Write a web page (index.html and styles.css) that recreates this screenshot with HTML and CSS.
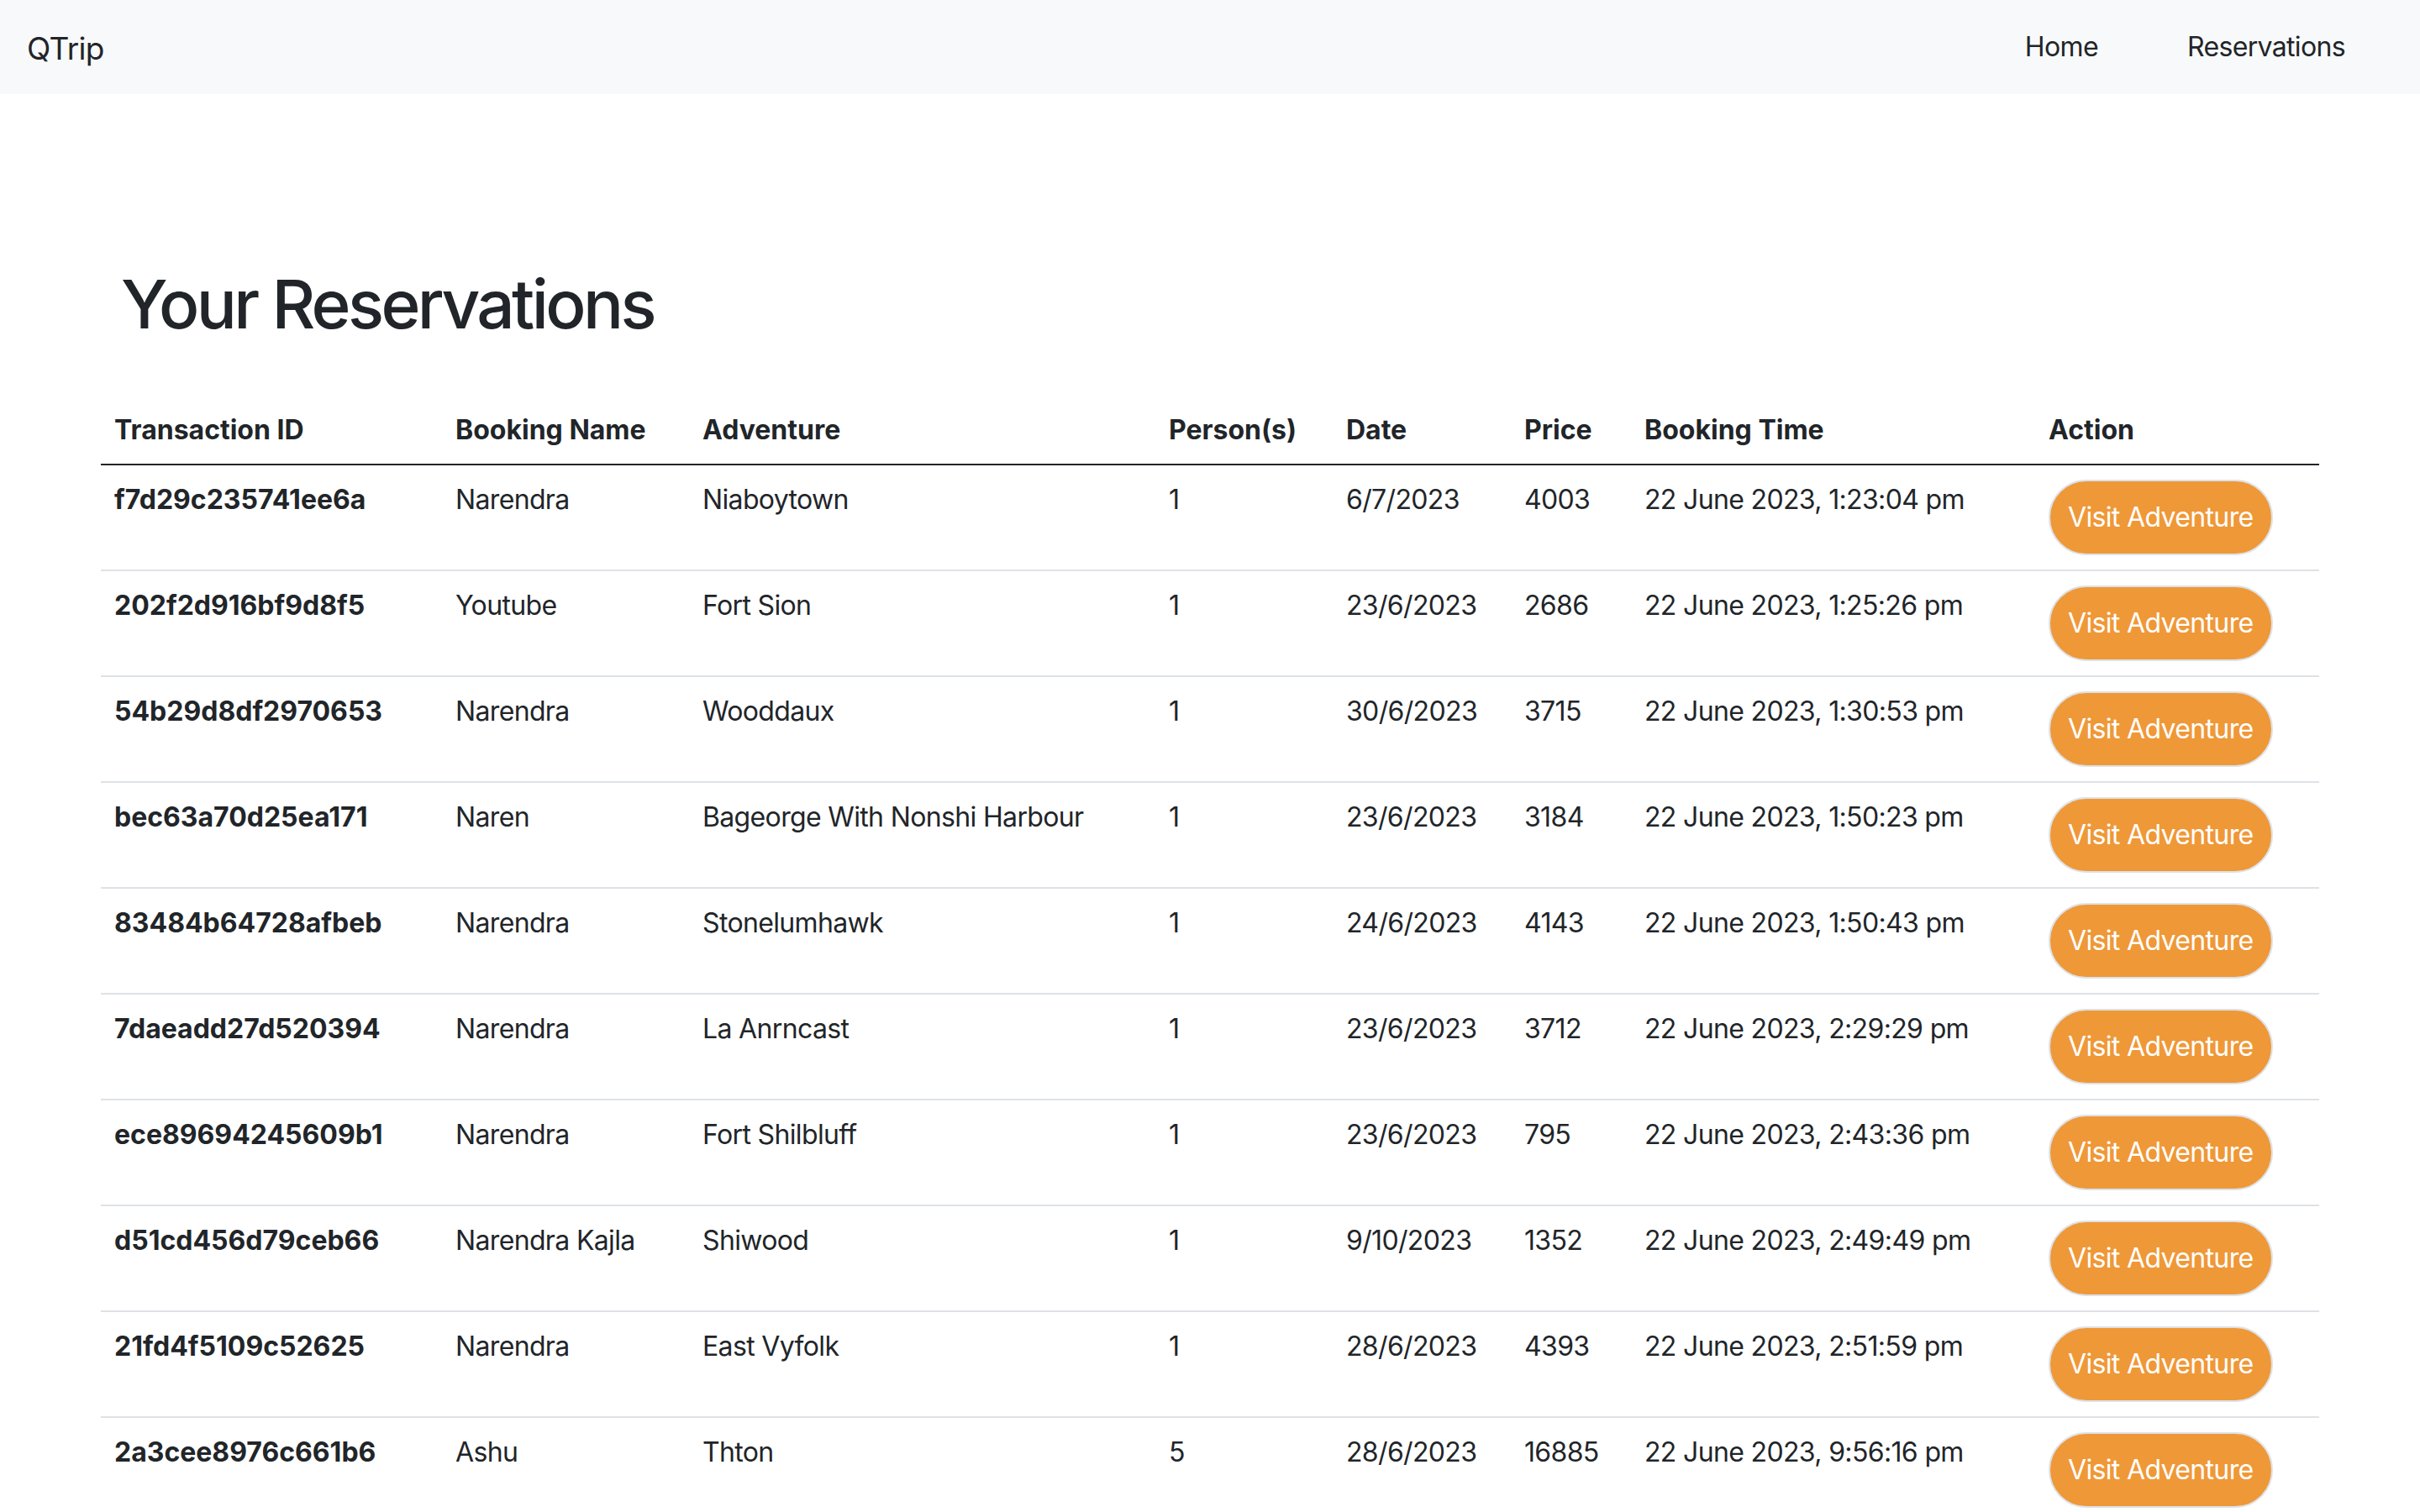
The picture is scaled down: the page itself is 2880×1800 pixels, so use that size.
FILE: index.html
```html
<!DOCTYPE html>
<html lang="en">
<head>
<meta charset="utf-8">
<title>QTrip - Reservations</title>
<link rel="stylesheet" href="styles.css">
</head>
<body>
<nav class="navbar">
  <a class="brand" href="#">QTrip</a>
  <div class="nav-links">
    <a class="nav-link" href="#">Home</a>
    <a class="nav-link" href="#">Reservations</a>
  </div>
</nav>
<main class="container">
  <h1 class="page-title">Your Reservations</h1>
  <table class="res-table">
    <colgroup>
      <col class="c-id"><col class="c-name"><col class="c-adv"><col class="c-per"><col class="c-date"><col class="c-price"><col class="c-time"><col class="c-act">
    </colgroup>
    <thead>
      <tr>
        <th>Transaction ID</th><th>Booking Name</th><th>Adventure</th><th>Person(s)</th><th>Date</th><th>Price</th><th>Booking Time</th><th>Action</th>
      </tr>
    </thead>
    <tbody>
      <tr><th>f7d29c235741ee6a</th><td>Narendra</td><td>Niaboytown</td><td>1</td><td>6/7/2023</td><td>4003</td><td>22 June 2023, 1:23:04 pm</td><td><a class="btn-visit" href="#">Visit Adventure</a></td></tr>
      <tr><th>202f2d916bf9d8f5</th><td>Youtube</td><td>Fort Sion</td><td>1</td><td>23/6/2023</td><td>2686</td><td>22 June 2023, 1:25:26 pm</td><td><a class="btn-visit" href="#">Visit Adventure</a></td></tr>
      <tr><th>54b29d8df2970653</th><td>Narendra</td><td>Wooddaux</td><td>1</td><td>30/6/2023</td><td>3715</td><td>22 June 2023, 1:30:53 pm</td><td><a class="btn-visit" href="#">Visit Adventure</a></td></tr>
      <tr><th>bec63a70d25ea171</th><td>Naren</td><td>Bageorge With Nonshi Harbour</td><td>1</td><td>23/6/2023</td><td>3184</td><td>22 June 2023, 1:50:23 pm</td><td><a class="btn-visit" href="#">Visit Adventure</a></td></tr>
      <tr><th>83484b64728afbeb</th><td>Narendra</td><td>Stonelumhawk</td><td>1</td><td>24/6/2023</td><td>4143</td><td>22 June 2023, 1:50:43 pm</td><td><a class="btn-visit" href="#">Visit Adventure</a></td></tr>
      <tr><th>7daeadd27d520394</th><td>Narendra</td><td>La Anrncast</td><td>1</td><td>23/6/2023</td><td>3712</td><td>22 June 2023, 2:29:29 pm</td><td><a class="btn-visit" href="#">Visit Adventure</a></td></tr>
      <tr><th>ece89694245609b1</th><td>Narendra</td><td>Fort Shilbluff</td><td>1</td><td>23/6/2023</td><td>795</td><td>22 June 2023, 2:43:36 pm</td><td><a class="btn-visit" href="#">Visit Adventure</a></td></tr>
      <tr><th>d51cd456d79ceb66</th><td>Narendra Kajla</td><td>Shiwood</td><td>1</td><td>9/10/2023</td><td>1352</td><td>22 June 2023, 2:49:49 pm</td><td><a class="btn-visit" href="#">Visit Adventure</a></td></tr>
      <tr><th>21fd4f5109c52625</th><td>Narendra</td><td>East Vyfolk</td><td>1</td><td>28/6/2023</td><td>4393</td><td>22 June 2023, 2:51:59 pm</td><td><a class="btn-visit" href="#">Visit Adventure</a></td></tr>
      <tr><th>2a3cee8976c661b6</th><td>Ashu</td><td>Thton</td><td>5</td><td>28/6/2023</td><td>16885</td><td>22 June 2023, 9:56:16 pm</td><td><a class="btn-visit" href="#">Visit Adventure</a></td></tr>
    </tbody>
  </table>
</main>
</body>
</html>
```

FILE: styles.css
```css
* {
  box-sizing: border-box;
}

body {
  margin: 0;
  font-family: Inter, "Noto Sans", "Liberation Sans", sans-serif;
  font-size: 32px;
  line-height: 1.5;
  letter-spacing: -0.65px;
  color: #212529;
  background: #ffffff;
}

a {
  text-decoration: none;
  color: inherit;
}

.navbar {
  height: 112px;
  background: #f8f9fa;
  display: flex;
  align-items: center;
  justify-content: space-between;
  padding: 0 89px 0 32px;
}

.brand {
  font-size: 37px;
  line-height: 56px;
  color: #212529;
  position: relative;
  top: 2px;
}

.nav-links {
  display: flex;
  gap: 106px;
}

.nav-link {
  font-size: 32px;
  line-height: 48px;
  color: #212529;
}

.container {
  margin: 0 120px;
}

.page-title {
  margin: 202px 0 62px 0;
  padding-left: 24px;
  font-size: 80px;
  font-weight: 500;
  line-height: 96px;
  letter-spacing: -3.6px;
}

.res-table {
  width: 2640px;
  border-collapse: collapse;
  table-layout: fixed;
}

.c-id { width: 406px; }
.c-name { width: 294px; }
.c-adv { width: 555px; }
.c-per { width: 211px; }
.c-date { width: 212px; }
.c-price { width: 143px; }
.c-time { width: 481px; }
.c-act { width: 338px; }

.res-table th,
.res-table td {
  text-align: left;
  vertical-align: top;
  line-height: 48px;
  white-space: nowrap;
}

.res-table th {
  letter-spacing: 0;
}

.res-table thead th {
  padding: 16px 16px;
  font-weight: 700;
  border-bottom: 2px solid #212529;
}

.res-table tbody th,
.res-table tbody td {
  padding: 17px 16px;
}

.res-table tbody th {
  font-weight: 700;
}

.res-table tbody td {
  font-weight: 400;
}

.res-table tbody tr {
  border-bottom: 2px solid #dee2e6;
}

.btn-visit {
  display: inline-block;
  vertical-align: top;
  padding: 19px 21px;
  border: 2px solid #dee2e6;
  border-radius: 45px;
  background: #ef9838;
  color: #ffffff;
  font-size: 32px;
  line-height: 48px;
}
```
